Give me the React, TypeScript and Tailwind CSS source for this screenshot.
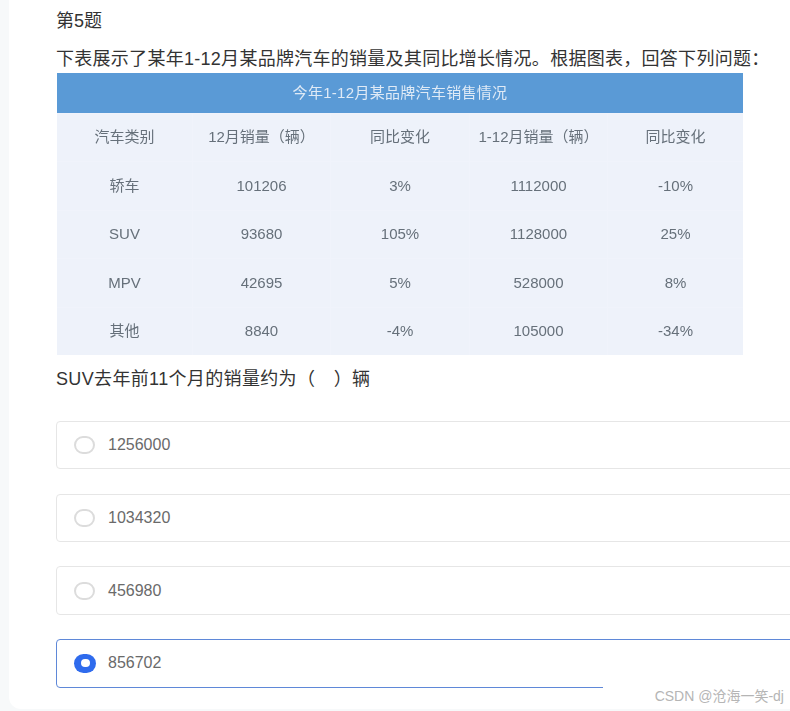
import React from "react";

const font = { fontFamily: '"Liberation Sans", "Noto Sans CJK SC", sans-serif' };

const rows = [
  ["汽车类别", "12月销量（辆）", "同比变化", "1-12月销量（辆）", "同比变化"],
  ["轿车", "101206", "3%", "1112000", "-10%"],
  ["SUV", "93680", "105%", "1128000", "25%"],
  ["MPV", "42695", "5%", "528000", "8%"],
  ["其他", "8840", "-4%", "105000", "-34%"],
];

const options = [
  { label: "1256000", checked: false },
  { label: "1034320", checked: false },
  { label: "456980", checked: false },
  { label: "856702", checked: true },
];

export default function App() {
  return (
    <div
      style={font}
      className="relative w-[790px] h-[711px] overflow-hidden bg-[#f7f9fa] pl-[9px] pb-[2px]"
    >
      <div className="h-full bg-white rounded-bl-[12px] pl-[47px] pt-[9px] overflow-hidden">
        <h2 className="text-[18px] leading-[24px] text-[#333333]">第5题</h2>
        <p className="mt-[14px] text-[18px] leading-[24px] tracking-[0.28px] text-[#333333] whitespace-nowrap">
          下表展示了某年1-12月某品牌汽车的销量及其同比增长情况。根据图表，回答下列问题：
        </p>

        <div className="mt-[2px] ml-px w-[686px] bg-[#eef2fa] blur-[0.4px]">
          <div className="h-[40px] flex items-center justify-center bg-[#5a9ad6] text-[15px] tracking-[0.3px] text-[#dfeaf6]">
            今年1-12月某品牌汽车销售情况
          </div>
          {rows.map((row, i) => (
            <div
              key={i}
              className="grid grid-cols-[136px_138px_139px_138px_135px] h-[48.4px] border-t border-[#f0f3fb]"
            >
              {row.map((cell, j) => (
                <div
                  key={j}
                  className="flex items-center justify-center border-r border-[#f0f3fb] text-[15px] text-[#66707a] last:border-r-0"
                >
                  {cell}
                </div>
              ))}
            </div>
          ))}
        </div>

        <p className="mt-[12px] text-[18px] leading-[24px] tracking-[0.35px] text-[#333333] whitespace-pre">
          SUV去年前11个月的销量约为（　）辆
        </p>

        <div className="mt-[30px] flex flex-col gap-[24.2px] w-[760px]">
          {options.map((option) => (
            <div
              key={option.label}
              className={`h-[48.5px] flex items-center pl-[17px] rounded-[4px] border ${
                option.checked ? "border-[#5f88d8]" : "border-[#e6e6e6]"
              }`}
            >
              {option.checked ? (
                <span className="w-[22px] h-[19px] rounded-full bg-[#2f6bed] flex items-center justify-center">
                  <span className="w-[9px] h-[8px] rounded-full bg-white" />
                </span>
              ) : (
                <span className="w-[21px] h-[18px] mr-px rounded-full border-2 border-[#dcdcdc] bg-white" />
              )}
              <span className="ml-[12px] text-[16px] text-[#6a6a6a]">{option.label}</span>
            </div>
          ))}
        </div>
      </div>

      {/* 右下角水印遮挡 */}
      <div className="absolute left-[603px] top-[668px] w-[187px] h-[41px] bg-white flex items-center justify-end pr-[6px] pt-[16px]">
        <span className="text-[14px] text-[#b5b5b5] whitespace-nowrap">CSDN @沧海一笑-dj</span>
      </div>
    </div>
  );
}
